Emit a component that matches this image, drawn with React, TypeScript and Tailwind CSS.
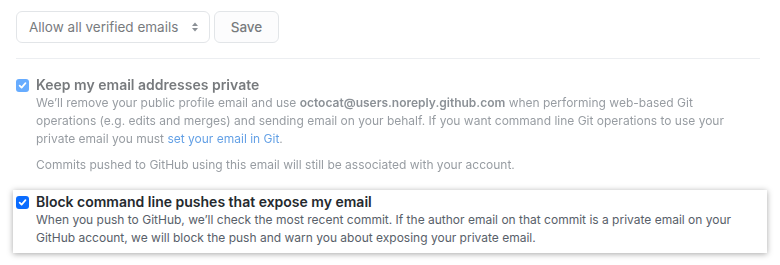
import React from "react";

function Check({ faded }: { faded?: boolean }) {
  return (
    <span
      className={`mt-[3px] flex h-[13px] w-[13px] shrink-0 items-center justify-center rounded-[3px] ${
        faded ? "bg-[#0a7aff]" : "bg-[#0a6cff]"
      }`}
    >
      <svg width="9" height="9" viewBox="0 0 10 10" fill="none">
        <path d="M1.8 5.2 L4 7.4 L8.3 2.4" stroke="white" strokeWidth="1.9" strokeLinecap="round" strokeLinejoin="round" />
      </svg>
    </span>
  );
}

export default function App() {
  return (
    <div
      className="h-[265px] w-[780px] overflow-hidden bg-white text-[12px] text-[#24292e]"
      style={{ fontFamily: "Inter, 'Liberation Sans', Arial, sans-serif" }}
    >
      <div className="opacity-[0.62]">
        <div className="flex gap-1 px-4 pt-[11px]">
          <div className="flex h-[32px] w-[194px] items-center justify-between rounded-[6px] border border-[#d1d5da] bg-white pl-[12px] pr-[10px] text-[13.5px] text-[#24292e]">
            <span>Allow all verified emails</span>
            <svg width="8" height="12" viewBox="0 0 8 12" fill="#444d56">
              <path d="M4 1.5 L7 5 H1 Z" />
              <path d="M4 10.5 L7 7 H1 Z" />
            </svg>
          </div>
          <div className="flex h-[32px] w-[65px] items-center justify-center rounded-[6px] border border-[#d1d5da] bg-[#fafbfc] text-[13.5px] font-medium text-[#24292e]">
            Save
          </div>
        </div>
        <div className="ml-4 mr-[20px] mt-[15px] border-t border-[#e1e4e8]" />
        <div className="flex gap-[7px] px-4 pt-[17px]">
          <Check faded />
          <div>
            <div className="text-[14px] font-semibold leading-[18px]">Keep my email addresses private</div>
            <p className="leading-[18px] text-[#586069]">
              We’ll remove your public profile email and use{" "}
              <strong className="font-semibold text-[#444d56]">octocat@users.noreply.github.com</strong> when performing web-based Git
              <br />
              operations (e.g. edits and merges) and sending email on your behalf. If you want command line Git operations to use your
              <br />
              private email you must <span className="text-[#0366d6]">set your email in Git</span>.
            </p>
            <p className="mt-[8px] leading-[18px] text-[#586069]">
              Commits pushed to GitHub using this email will still be associated with your account.
            </p>
          </div>
        </div>
      </div>
      <div className="mx-[13px] mt-[16px] flex gap-[7px] bg-white px-[3px] pb-[6px] pt-[3px] shadow-[0_1px_6px_rgba(0,0,0,0.35)]">
        <Check />
        <div>
          <div className="text-[14px] font-semibold leading-[18px]">Block command line pushes that expose my email</div>
          <p className="leading-[18px] text-[#586069]">
            When you push to GitHub, we’ll check the most recent commit. If the author email on that commit is a private email on your
            <br />
            GitHub account, we will block the push and warn you about exposing your private email.
          </p>
        </div>
      </div>
    </div>
  );
}
